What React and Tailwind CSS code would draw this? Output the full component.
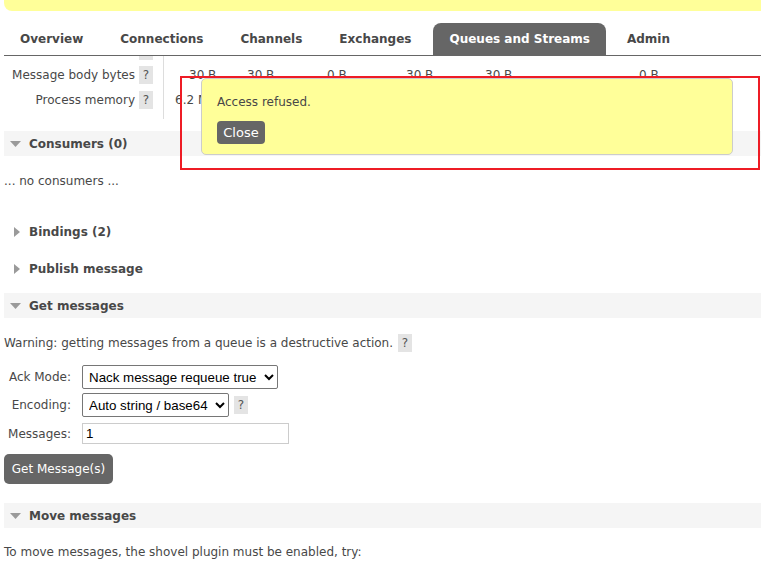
import { useState } from "react";

const tabs = ["Overview", "Connections", "Channels", "Exchanges", "Queues and Streams", "Admin"];

const Help = ({ className = "" }) => (
  <span className={`inline-flex items-center justify-center w-[14px] h-[18px] bg-[#e4e4e4] text-[#555] text-[12px] ${className}`}>
    ?
  </span>
);

const Arrow = ({ open }) =>
  open ? (
    <svg width="11" height="6" viewBox="0 0 11 6" className="ml-[6px] mr-[8px]">
      <path d="M0 0h11L5.5 6z" fill="#9a9a9a" />
    </svg>
  ) : (
    <svg width="6" height="10" viewBox="0 0 6 10" className="ml-[10px] mr-[9px]">
      <path d="M0 0l6 5-6 5z" fill="#9a9a9a" />
    </svg>
  );

const Section = ({ title, open, className = "" }) => (
  <div className={`flex items-center h-[25px] ${open ? "bg-[#f5f5f5]" : ""} ${className}`}>
    <Arrow open={open} />
    <span className="font-bold text-[12px] text-[#484848]">{title}</span>
  </div>
);

export default function App() {
  const [visible, setVisible] = useState(true);

  return (
    <div className="relative w-[761px] h-[563px] overflow-hidden bg-white font-['DejaVu_Sans',Verdana,sans-serif] text-[12px] text-[#484848]">
      {/* status strip */}
      <div className="ml-[4px] h-[11px] bg-[#ffff99] rounded-bl-[8px]" />

      {/* tabs */}
      <div className="mt-[12px] ml-[4px] flex items-end gap-[5px] h-[33px] border-b border-[#666]">
        {tabs.map((t) => (
          <div
            key={t}
            className={`h-[32px] px-[16px] flex items-center font-bold text-[12px] rounded-t-[8px] ${
              t === "Queues and Streams" ? "bg-[#666] text-white ml-[1px]" : "text-[#484848]"
            }`}
          >
            {t}
          </div>
        ))}
      </div>

      {/* stats table (tail) */}
      <div className="ml-[4px] flex h-[63px]">
        <div className="w-[160px] border-r border-[#ddd] pr-[10px] flex flex-col items-end">
          <div className="w-[14px] h-[4px] bg-[#e4e4e4]" />
          <div className="mt-[2px] h-[25px] flex items-center gap-[4px]">
            <span>Message body bytes</span>
            <Help />
          </div>
          <div className="h-[25px] flex items-center gap-[4px]">
            <span>Process memory</span>
            <Help />
          </div>
        </div>
        <div className="flex-1 pt-[6px]">
          <div className="h-[25px] flex items-center">
            <span className="ml-[25px] w-[58px]">30 B</span>
            <span className="w-[80px]">30 B</span>
            <span className="w-[79px]">0 B</span>
            <span className="w-[79px]">30 B</span>
            <span className="w-[154px]">30 B</span>
            <span>0 B</span>
          </div>
          <div className="h-[25px] flex items-center">
            <span className="ml-[11px]">6.2 MiB</span>
          </div>
        </div>
      </div>

      <div className="ml-[4px]">
        <Section title="Consumers (0)" open className="mt-[12px]" />
        <div className="mt-[16px] h-[18px] flex items-center">... no consumers ...</div>

        <Section title="Bindings (2)" className="mt-[29px]" />
        <Section title="Publish message" className="mt-[12px]" />
        <Section title="Get messages" open className="mt-[12px]" />

        <div className="mt-[16px] h-[18px] flex items-center gap-[5px]">
          <span>Warning: getting messages from a queue is a destructive action.</span>
          <Help />
        </div>

        <div className="mt-[13px] flex items-center">
          <label className="w-[67px] text-right">Ack Mode:</label>
          <select className="ml-[11px] w-[196px] h-[24px] border border-[#767676] rounded-[2px] bg-white px-[2px] text-[13.33px] text-black font-['Liberation_Sans',Arial,sans-serif]">
            <option>Nack message requeue true</option>
          </select>
        </div>
        <div className="mt-[4px] flex items-center">
          <label className="w-[67px] text-right">Encoding:</label>
          <select className="ml-[11px] w-[147px] h-[24px] border border-[#767676] rounded-[2px] bg-white px-[2px] text-[13.33px] text-black font-['Liberation_Sans',Arial,sans-serif]">
            <option>Auto string / base64</option>
          </select>
          <Help className="ml-[5px]" />
        </div>
        <div className="mt-[6px] flex items-center">
          <label className="w-[67px] text-right">Messages:</label>
          <input
            defaultValue="1"
            className="ml-[11px] w-[207px] h-[21px] border border-[#ccc] px-[3px] text-[13.33px] text-black font-['Liberation_Sans',Arial,sans-serif] outline-none"
          />
        </div>
        <button className="mt-[10px] w-[109px] h-[30px] rounded-[5px] bg-[#666] text-white text-[12px]">
          Get Message(s)
        </button>

        <Section title="Move messages" open className="mt-[19px]" />
        <div className="mt-[15px] h-[18px] flex items-center">
          To move messages, the shovel plugin must be enabled, try:
        </div>
      </div>

      {visible && (
        <>
          <div className="absolute left-[201px] top-[78px] w-[532px] h-[77px] bg-[#ffff99] border border-[#ccc] rounded-[5px] pl-[15px] pt-[14px]">
            <div className="h-[18px] flex items-center">Access refused.</div>
            <button
              onClick={() => setVisible(false)}
              className="mt-[10px] w-[48px] h-[23px] rounded-[4px] bg-[#666] text-white text-[13px]"
            >
              Close
            </button>
          </div>
          <div className="absolute left-[180px] top-[76px] w-[580px] h-[94px] border-2 border-[#ee1c25] pointer-events-none" />
        </>
      )}
    </div>
  );
}
